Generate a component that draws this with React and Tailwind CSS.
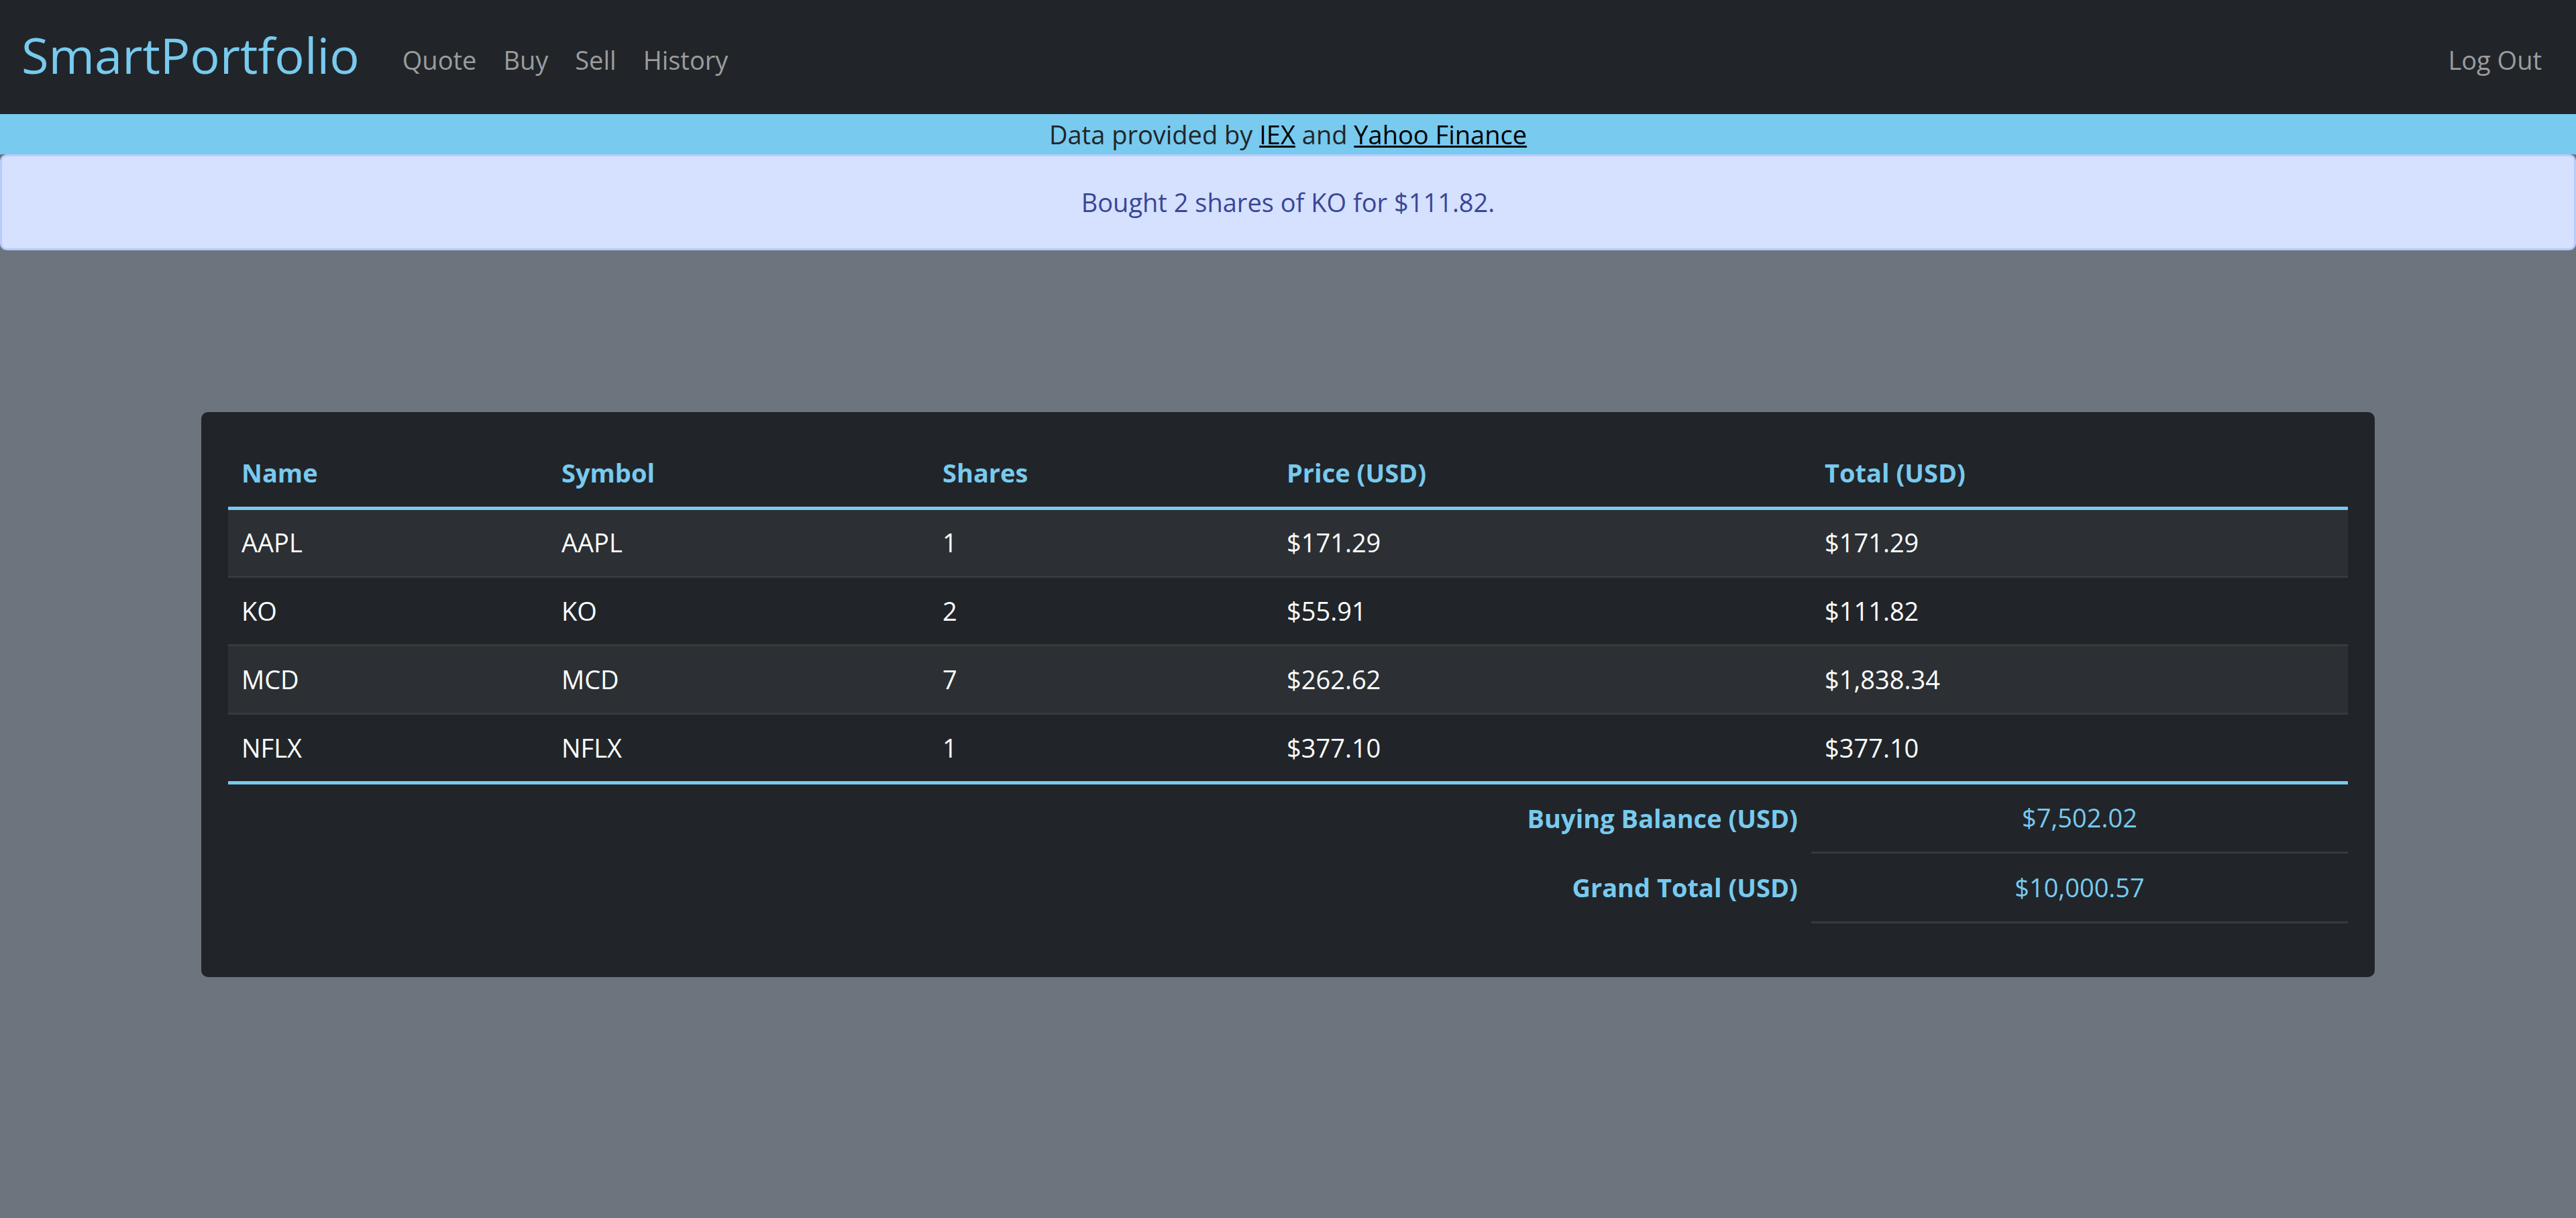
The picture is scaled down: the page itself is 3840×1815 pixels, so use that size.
import React from "react";

const rows = [
  ["AAPL", "AAPL", "1", "$171.29", "$171.29"],
  ["KO", "KO", "2", "$55.91", "$111.82"],
  ["MCD", "MCD", "7", "$262.62", "$1,838.34"],
  ["NFLX", "NFLX", "1", "$377.10", "$377.10"],
];

export default function App() {
  return (
    <div
      className="min-h-[1815px] flex flex-col bg-[#6c757d]"
      style={{ fontFamily: '"Segoe UI", "Open Sans", "Noto Sans", sans-serif' }}
    >
      <nav className="h-[170px] bg-[#212529] flex items-center pl-[32px] pr-[31px] shrink-0">
        <a className="text-[74px] leading-none text-[#78caee] mr-[44px] pb-[6px]">SmartPortfolio</a>
        <div className="flex items-center text-[38px] text-[#9b9c9e] mt-[8px]">
          <a className="px-[20px]">Quote</a>
          <a className="px-[20px]">Buy</a>
          <a className="px-[20px]">Sell</a>
          <a className="px-[20px]">History</a>
        </div>
        <div className="ml-auto text-[38px] text-[#9b9c9e] mt-[8px]">
          <a className="px-[20px]">Log Out</a>
        </div>
      </nav>

      <div className="h-[60px] bg-[#78caee] text-center text-[38px] leading-[60px] text-[#212529] shrink-0">
        Data provided by <a className="underline text-black">IEX</a> and{" "}
        <a className="underline text-black">Yahoo Finance</a>
      </div>

      <div className="h-[143px] bg-[#d6e0ff] border-[3px] border-[#b8cbfb] rounded-[10px] flex items-center justify-center text-[38px] text-[#384797] shrink-0">
        Bought 2 shares of KO for $111.82.
      </div>

      <main className="flex-1 pt-[241px] px-[300px]">
        <div className="bg-[#212529] rounded-[10px] pt-[40px] pb-[40px] px-[40px]">
          <table className="w-full table-fixed border-collapse text-[38px] mb-[40px]">
            <colgroup>
              <col className="w-[477px]" />
              <col className="w-[568px]" />
              <col className="w-[513px]" />
              <col className="w-[802px]" />
              <col className="w-[800px]" />
            </colgroup>
            <thead>
              <tr className="border-b-[5px] border-[#78caee]">
                {["Name", "Symbol", "Shares", "Price (USD)", "Total (USD)"].map((h) => (
                  <th key={h} className="h-[103px] px-[20px] text-left font-bold text-[#78caee] align-middle">
                    {h}
                  </th>
                ))}
              </tr>
            </thead>
            <tbody>
              {rows.map((r, i) => (
                <tr
                  key={i}
                  className={
                    (i % 2 === 0 ? "bg-[#2c3034] " : "bg-[#212529] ") +
                    (i < 3 ? "border-b-[3px] border-[#373b3e]" : "")
                  }
                >
                  {r.map((c, j) => (
                    <td key={j} className={(i < 3 ? "h-[102px]" : "h-[103px]") + " px-[20px] text-white align-middle"}>
                      {c}
                    </td>
                  ))}
                </tr>
              ))}
            </tbody>
            <tfoot>
              <tr className="border-t-[5px] border-[#78caee]">
                <td colSpan={4} className="h-[104px] px-[20px] text-right font-bold text-[#78caee] align-middle">
                  Buying Balance (USD)
                </td>
                <td className="h-[104px] px-[20px] text-center text-[#78caee] align-middle border-b-[3px] border-[#373b3e]">
                  $7,502.02
                </td>
              </tr>
              <tr>
                <td colSpan={4} className="h-[104px] px-[20px] text-right font-bold text-[#78caee] align-middle">
                  Grand Total (USD)
                </td>
                <td className="h-[104px] px-[20px] text-center text-[#78caee] align-middle border-b-[3px] border-[#373b3e]">
                  $10,000.57
                </td>
              </tr>
            </tfoot>
          </table>
        </div>
      </main>
    </div>
  );
}
